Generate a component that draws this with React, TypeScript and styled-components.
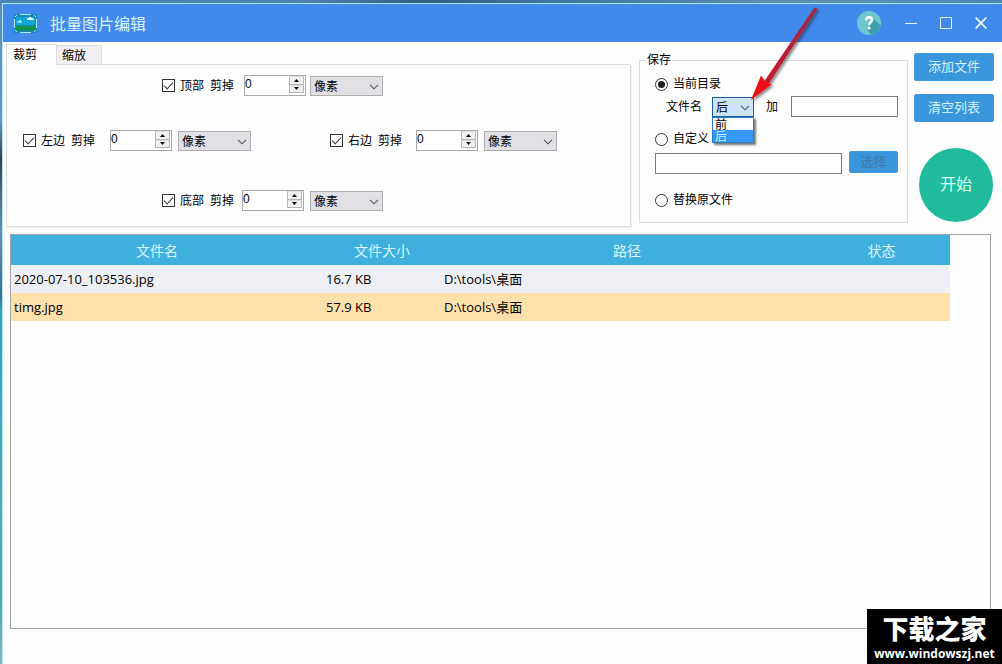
import React, { useState } from "react";
import styled, { createGlobalStyle } from "styled-components";

const Global = createGlobalStyle`
  *, *::before, *::after { box-sizing: border-box; }
  body { margin: 0; font: 12px/16px "Liberation Sans", "Noto Sans CJK SC", sans-serif; color: #000; }
  button, input, select { font: inherit; color: inherit; margin: 0; }
`;

const Desktop = styled.div`
  position: relative;
  display: flex;
  min-height: 100vh;
  padding: 3px 0 0 2px;
  overflow: hidden;
  background:
    linear-gradient(90deg, #4a86b2, #4b84ae 30%, #2f6180 42%, #3c769c 55%, #5a93b4 80%, #4c88b0) top / 100% 3px no-repeat,
    linear-gradient(180deg, #5b8dbb 0, #6f95bb 120px, #33414c 160px, #50657c 190px, #6c8db0 230px, #3d6e8e 295px, #2fa3b3 310px, #4fa9b3 500px, #55a5ab 600px, #8ab5bf 664px);
`;

const Window = styled.div`
  flex: 1;
  display: flex;
  flex-direction: column;
  border: solid #b4e6fa;
  border-width: 1px 0 0 1px;
  background: #fdfdfe;
`;

const TitleBar = styled.header`
  display: flex;
  align-items: center;
  height: 38px;
  padding: 0 4px 0 11px;
  background: #4289ec;
  color: #d9f3ff;
`;

const Title = styled.h1`
  flex: 1;
  margin: 0 0 0 13px;
  font: 400 16px/24px "Noto Sans CJK SC", sans-serif;
`;

const CaptionButton = styled.button<{ $wide?: boolean }>`
  display: grid;
  place-items: center;
  width: ${(p) => (p.$wide ? 48 : 35)}px;
  height: 30px;
  padding: 0;
  border: 0;
  background: none;
`;

const TopArea = styled.div`
  display: flex;
  gap: 8px;
  padding: 1px 8px 0 3px;
`;

const CropSection = styled.section`
  flex: 1;
  display: flex;
  flex-direction: column;
  padding-top: 1px;
`;

const TabList = styled.div`
  display: flex;
  align-items: flex-end;
`;

const Tab = styled.button<{ $active?: boolean }>`
  width: ${(p) => (p.$active ? 51 : 45)}px;
  height: ${(p) => (p.$active ? 21 : 19)}px;
  margin-bottom: ${(p) => (p.$active ? -1 : 0)}px;
  padding: ${(p) => (p.$active ? "0 6px" : "2px 5px 0")};
  text-align: left;
  line-height: 16px;
  border: 1px solid #dcdcdf;
  border-bottom: 0;
  border-left-width: ${(p) => (p.$active ? 1 : 0)}px;
  background: ${(p) => (p.$active ? "#fdfdfe" : "#f0eff3")};
  z-index: ${(p) => (p.$active ? 1 : 0)};
`;

const CropPanel = styled.div`
  display: grid;
  grid-template-columns: 307px 1fr;
  grid-template-rows: 55px 60px 21px;
  align-items: start;
  padding: 10px 0 15px 16px;
  border: 1px solid #dcdcdf;
  box-shadow: 1px 1px 0 #efeff1;
`;

const CropRow = styled.div<{ $centered?: boolean; $gaps: [number, number] }>`
  display: flex;
  align-items: center;
  height: 21px;
  grid-column: ${(p) => (p.$centered ? "1 / -1" : "auto")};
  padding-left: ${(p) => (p.$centered ? 139 : 0)}px;

  & > div:nth-of-type(1) { margin-left: ${(p) => p.$gaps[0]}px; }
  & > div:nth-of-type(2) { margin-left: ${(p) => p.$gaps[1]}px; }
`;

const CheckLabel = styled.label`
  display: flex;
  align-items: center;
  gap: 5px;
  margin-right: 6px;
`;

const CheckBox = styled.input`
  appearance: none;
  display: grid;
  place-items: center;
  width: 13px;
  height: 13px;
  border: 1px solid #333;
  background: #fff;

  &:checked::before {
    content: "";
    width: 9px;
    height: 5px;
    border: solid #3a3a3a;
    border-width: 0 0 1px 1px;
    transform: translateY(-1px) rotate(-47deg);
  }
`;

const Spin = styled.div`
  display: flex;
  width: 62px;
  height: 21px;
  border: 1px solid #a8a8ab;
  background: #fff;
`;

const SpinInput = styled.input`
  flex: 1;
  min-width: 0;
  padding: 0 0 4px 0;
  border: 0;
  outline: 0;
  background: none;
`;

const SpinButtons = styled.div`
  display: flex;
  flex-direction: column;
  width: 15px;
  height: 17px;
  margin-right: 1px;
`;

const SpinButton = styled.button`
  display: grid;
  place-items: center;
  flex: 1;
  padding: 0;
  border: 1px solid #b4b4b6;
  border-top-color: #dcdcde;
  background: #f0f0f2;
`;

const SelectBox = styled.div<{ $open?: boolean }>`
  position: relative;
  align-self: flex-end;
  width: ${(p) => (p.$open ? 42 : 73)}px;
  height: 20px;

  & > svg {
    position: absolute;
    right: 4px;
    top: 8px;
    pointer-events: none;
  }
`;

const Select = styled.select<{ $open?: boolean }>`
  appearance: none;
  display: block;
  width: 100%;
  height: 100%;
  padding: 1px 3px 0;
  border: 1px solid ${(p) => (p.$open ? "#1a5f9e" : "#adadaf")};
  border-radius: 0;
  outline: 0;
  background: ${(p) => (p.$open ? "#cde4f8" : "#e1e0e4")};
`;

const OptionList = styled.ul`
  position: absolute;
  z-index: 2;
  top: 20px;
  left: 0;
  width: 42px;
  margin: 0;
  padding: 0;
  list-style: none;
  border: 1px solid #2a7cc4;
  background: #fff;
  box-shadow: 2px 2px 2px #77777a;
`;

const OptionItem = styled.li<{ $active?: boolean }>`
  height: 12px;
  padding-left: 2px;
  line-height: 14px;
  background: ${(p) => (p.$active ? "#3397fb" : "#fff")};
  color: ${(p) => (p.$active ? "#c8f0ff" : "#000")};
`;

const Arrow = styled.svg`
  position: absolute;
  z-index: 3;
  pointer-events: none;
`;

const ArrowLayer = styled.div`
  position: absolute;
  z-index: 3;
  left: 36px;
  bottom: 13px;
  width: 76px;
  height: 100px;
  pointer-events: none;
`;

const SaveGroup = styled.fieldset`
  align-self: flex-start;
  width: 269px;
  min-width: 0;
  margin: 9px 0 0;
  padding: 0 9px 12px 6px;
  border: 1px solid #dcdcdf;
`;

const Legend = styled.legend`
  padding: 0 1px;
`;

const SaveGrid = styled.div`
  display: grid;
  grid-template-columns: minmax(0, 1fr);
  grid-template-rows: 22px 33px 22px 39px 20px;
  align-items: start;
  padding: 6px 0 0 9px;
`;

const RadioLabel = styled.label`
  display: flex;
  align-items: center;
  gap: 5px;
  height: 20px;
`;

const Radio = styled.input`
  appearance: none;
  display: grid;
  place-items: center;
  width: 13px;
  height: 13px;
  border: 1px solid #333;
  border-radius: 50%;
  background: #fff;

  &:checked::before {
    content: "";
    width: 7px;
    height: 7px;
    border-radius: 50%;
    background: #222;
  }
`;

const NameRow = styled.div`
  display: flex;
  align-items: center;
  height: 21px;
  padding-left: 11px;

  & > div { margin: 0 12px 0 10px; }
  & > input { margin-left: 13px; }
`;

const PathRow = styled.div`
  display: flex;
  align-items: flex-start;
  gap: 7px;

  & > input { margin-top: 2px; }
`;

const TextField = styled.input`
  flex: 1;
  min-width: 0;
  height: 21px;
  padding: 0 3px;
  border: 1px solid #7a7a7c;
  background: #fff;
`;

const BlueButton = styled.button<{ $small?: boolean }>`
  width: ${(p) => (p.$small ? 49 : 80)}px;
  height: ${(p) => (p.$small ? 22 : 28)}px;
  padding: 0 0 2px;
  border: 1px solid #3f9be0;
  border-radius: 2px;
  background: #3a96da;
  color: ${(p) => (p.$small ? "#4779a2" : "#d5f2ff")};
  font: 13px/18px "Noto Sans CJK SC", sans-serif;
`;

const Actions = styled.div`
  display: flex;
  flex-direction: column;
  align-items: center;
  gap: 13px;
  width: 80px;
  margin-left: -2px;
  padding-top: 10px;
`;

const StartButton = styled.button`
  width: 74px;
  height: 74px;
  margin: 13px 0 0 4px;
  padding: 0 0 4px;
  border: 0;
  border-radius: 50%;
  background: #1fbb9c;
  color: #d5fff5;
  font: 16px/24px "Noto Sans CJK SC", sans-serif;
`;

const ListBox = styled.main`
  flex: 1;
  margin: 7px 11px 35px 7px;
  border: 1px solid #a3a3a6;
  background: #fdfdfe;
`;

const FileTable = styled.table`
  width: calc(100% - 40px);
  table-layout: fixed;
  border-collapse: collapse;
  font: 13px/20px "Open Sans", "Noto Sans CJK SC", sans-serif;
`;

const HeadCell = styled.th<{ $width?: number; $first?: boolean }>`
  width: ${(p) => (p.$width ? `${p.$width}px` : "auto")};
  height: 30px;
  padding: 2px ${(p) => (p.$first ? 20 : 0)}px 0 0;
  font-size: 14px;
  font-weight: 400;
  background: #3fb0dd;
  color: #d8f6ff;
`;

const FileRow = styled.tr<{ $selected?: boolean }>`
  height: 28px;
  background: ${(p) => (p.$selected ? "#fee0ab" : "#eeeff4")};
`;

const Cell = styled.td`
  padding: 0 3px;
`;

const Watermark = styled.aside`
  position: absolute;
  right: 0;
  bottom: 0;
  z-index: 4;
  width: 135px;
  height: 55px;
  background: #000;
  color: #fff;
  text-align: center;
  white-space: nowrap;
`;

const MarkName = styled.div`
  font: 900 26px/37px "Noto Sans CJK SC", sans-serif;
`;

const MarkUrl = styled.div`
  font: 700 12px/16px "Open Sans", sans-serif;
`;

const Chevron = () => (
  <svg width="10" height="6" viewBox="0 0 10 6" fill="none" stroke="#505054" strokeWidth="1.1">
    <path d="M1 .8 5 4.8 9 .8" />
  </svg>
);

const AppIcon = () => (
  <svg width="23" height="19" viewBox="0 0 23 19">
    <path d="M0 0h23v19H0z" fill="#1787b9" />
    <path d="M2 3h19v8H2z" fill="#0da8d4" />
    <path d="M2 12.500Q7 10.500 12 12.500q5 1 9-1v5H2z" fill="#159447" />
    <path d="M3 8.500h5V7.500H7V6.500H5v1H3zM13 6h7V5h-1V4h-2V3h-2v1h-2z" fill="#f2fdff" />
    <path d="M6 .5h11M6 18.500h11M.5 5v9M22.500 5v9M1 3l2-2M20 1l2 2M1 16l2 2M20 18l2-2" stroke="#aee9f6" fill="none" />
  </svg>
);

const HelpIcon = () => (
  <svg width="24" height="24" viewBox="0 0 24 24">
    <circle cx="12" cy="12" r="12" fill="#6dc7d0" />
    <path d="M15 6 23.500 14.500A12 12 0 0 1 14.500 23.700L10 19l4-6z" fill="#3c9fae" />
    <path d="M9.200 9.200c0-2 1.200-3 2.900-3s3 1 3 2.700c0 2.200-2.900 2.400-2.900 4.900" fill="none" stroke="#fff" strokeWidth="2.500" />
    <circle cx="12.200" cy="17" r="1.500" fill="#fff" />
  </svg>
);

const CropControl = ({ side, centered, gaps }: { side: string; centered?: boolean; gaps: [number, number] }) => {
  const [value, setValue] = useState(0);
  return (
    <CropRow $centered={centered} $gaps={gaps}>
      <CheckLabel>
        <CheckBox type="checkbox" defaultChecked />
        {side}
      </CheckLabel>
      <span>剪掉</span>
      <Spin>
        <SpinInput
          type="text"
          inputMode="numeric"
          aria-label={`${side}剪掉`}
          value={value}
          onChange={(e) => setValue(Number(e.target.value) || 0)}
        />
        <SpinButtons>
          <SpinButton type="button" aria-label="增加" onClick={() => setValue(value + 1)}>
            <svg width="5" height="3" viewBox="0 0 5 3"><path d="M0 3 2.500 0 5 3z" /></svg>
          </SpinButton>
          <SpinButton type="button" aria-label="减少" onClick={() => setValue(Math.max(0, value - 1))}>
            <svg width="5" height="3" viewBox="0 0 5 3"><path d="M0 0h5L2.500 3z" /></svg>
          </SpinButton>
        </SpinButtons>
      </Spin>
      <SelectBox>
        <Select aria-label={`${side}单位`}>
          <option>像素</option>
        </Select>
        <Chevron />
      </SelectBox>
    </CropRow>
  );
};

const files = [
  { name: "2020-07-10_103536.jpg", size: "16.7 KB", path: "D:\\tools\\桌面" },
  { name: "timg.jpg", size: "57.9 KB", path: "D:\\tools\\桌面" },
];

export default function App() {
  return (
    <Desktop>
      <Global />
      <Window>
        <TitleBar>
          <AppIcon />
          <Title>批量图片编辑</Title>
          <CaptionButton $wide aria-label="帮助"><HelpIcon /></CaptionButton>
          <CaptionButton aria-label="最小化">
            <svg width="12" height="12" viewBox="0 0 12 12"><path d="M0 6.500h12" stroke="#e4f7ff" /></svg>
          </CaptionButton>
          <CaptionButton aria-label="最大化">
            <svg width="12" height="12" viewBox="0 0 12 12"><path d="M.5.5h11v11H.5z" fill="none" stroke="#e4f7ff" /></svg>
          </CaptionButton>
          <CaptionButton aria-label="关闭">
            <svg width="12" height="12" viewBox="0 0 12 12"><path d="M.7.7l10.600 10.600M11.300.7.7 11.300" stroke="#f2fbff" strokeWidth="1.800" /></svg>
          </CaptionButton>
        </TitleBar>

        <TopArea>
          <CropSection>
            <TabList role="tablist">
              <Tab type="button" role="tab" aria-selected $active>裁剪</Tab>
              <Tab type="button" role="tab" aria-selected={false}>缩放</Tab>
            </TabList>
            <CropPanel role="tabpanel">
              <CropControl side="顶部" centered gaps={[10, 4]} />
              <CropControl side="左边" gaps={[15, 6]} />
              <CropControl side="右边" gaps={[14, 6]} />
              <CropControl side="底部" centered gaps={[8, 6]} />
            </CropPanel>
          </CropSection>

          <SaveGroup>
            <Legend>保存</Legend>
            <SaveGrid>
              <RadioLabel>
                <Radio type="radio" name="target" defaultChecked />
                当前目录
              </RadioLabel>
              <NameRow>
                <label htmlFor="position">文件名</label>
                <SelectBox $open>
                  <Select id="position" defaultValue="后" $open>
                    <option>前</option>
                    <option>后</option>
                  </Select>
                  <Chevron />
                  <OptionList role="listbox" aria-label="位置">
                    <OptionItem role="option" aria-selected={false}>前</OptionItem>
                    <OptionItem role="option" aria-selected $active>后</OptionItem>
                  </OptionList>
                  <ArrowLayer>
                    <Arrow width="76" height="100" viewBox="0 0 76 100">
                      <defs>
                        <filter id="soft" x="-20%" y="-20%" width="150%" height="150%">
                          <feDropShadow dx="2" dy="2" stdDeviation="1" floodColor="#222" floodOpacity="0.5" />
                        </filter>
                        <linearGradient id="shaft" x1="1" y1="0" x2="0" y2="1">
                          <stop offset="0" stopColor="#9c2747" />
                          <stop offset="1" stopColor="#c9182a" />
                        </linearGradient>
                      </defs>
                      <g filter="url(#soft)">
                        <path d="M66 4Q68 2.500 69.500 5L20.500 80 16.500 77z" fill="url(#shaft)" />
                        <path d="M3 96 13 71.500 16.500 76.500 19.500 79 24 80z" fill="#ee1114" />
                      </g>
                    </Arrow>
                  </ArrowLayer>
                </SelectBox>
                <label htmlFor="suffix">加</label>
                <TextField id="suffix" type="text" />
              </NameRow>
              <RadioLabel>
                <Radio type="radio" name="target" />
                自定义
              </RadioLabel>
              <PathRow>
                <TextField type="text" aria-label="自定义目录" />
                <BlueButton type="button" $small disabled>选择</BlueButton>
              </PathRow>
              <RadioLabel>
                <Radio type="radio" name="target" />
                替换原文件
              </RadioLabel>
            </SaveGrid>
          </SaveGroup>

          <Actions>
            <BlueButton type="button">添加文件</BlueButton>
            <BlueButton type="button">清空列表</BlueButton>
            <StartButton type="button">开始</StartButton>
          </Actions>
        </TopArea>

        <ListBox>
          <FileTable>
            <thead>
              <tr>
                <HeadCell scope="col" $width={312} $first>文件名</HeadCell>
                <HeadCell scope="col" $width={118}>文件大小</HeadCell>
                <HeadCell scope="col">路径</HeadCell>
                <HeadCell scope="col" $width={137}>状态</HeadCell>
              </tr>
            </thead>
            <tbody>
              {files.map((file, i) => (
                <FileRow key={file.name} $selected={i === 1}>
                  <Cell>{file.name}</Cell>
                  <Cell>{file.size}</Cell>
                  <Cell>{file.path}</Cell>
                  <Cell />
                </FileRow>
              ))}
            </tbody>
          </FileTable>
        </ListBox>
      </Window>
      <Watermark>
        <MarkName>下载之家</MarkName>
        <MarkUrl>www.windowszj.net</MarkUrl>
      </Watermark>
    </Desktop>
  );
}
